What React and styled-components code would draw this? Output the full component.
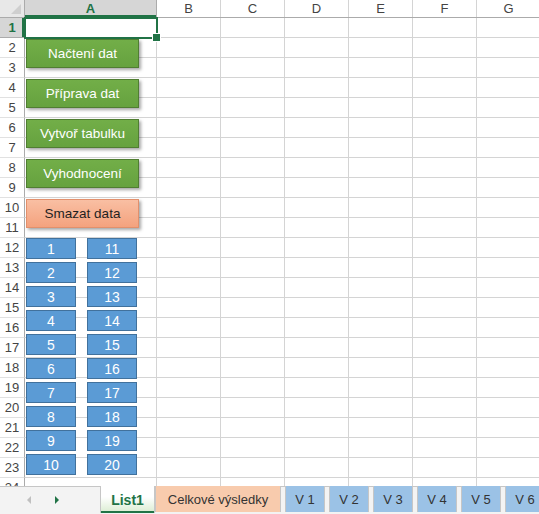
import React from "react";
import styled, { createGlobalStyle } from "styled-components";

const Global = createGlobalStyle`
  html, body { margin: 0; padding: 0; background: #fff; overflow: hidden; }
  * { box-sizing: border-box; }
`;

const COLS = [
  { key: "A", w: 132 },
  { key: "B", w: 64 },
  { key: "C", w: 64 },
  { key: "D", w: 64 },
  { key: "E", w: 64 },
  { key: "F", w: 64 },
  { key: "G", w: 64 },
];

const Page = styled.div`
  width: 539px;
  height: 514px;
  display: flex;
  flex-direction: column;
  font-family: "Liberation Sans", Arial, sans-serif;
  overflow: hidden;
`;

const Sheet = styled.div`
  position: relative;
  height: 486px;
  overflow: hidden;
  flex: none;
`;

const HeaderRow = styled.div`
  display: flex;
  height: 18px;
  border-bottom: 1px solid #ababab;
`;

const Corner = styled.div`
  position: relative;
  width: 25px;
  flex: none;
  background: #e8e8e8;
  border-right: 1px solid #ababab;
  &::after {
    content: "";
    position: absolute;
    right: 3px;
    bottom: 3px;
    width: 0;
    height: 0;
    border-left: 10px solid transparent;
    border-bottom: 10px solid #cfcfcf;
  }
`;

const ColHeader = styled.div`
  width: ${(p) => p.$w}px;
  flex: none;
  display: flex;
  align-items: center;
  justify-content: center;
  font-size: 13px;
  color: ${(p) => (p.$active ? "#217346" : "#444")};
  font-weight: ${(p) => (p.$active ? "bold" : "normal")};
  background: ${(p) => (p.$active ? "#d6d6d6" : "#fff")};
  border-right: 1px solid ${(p) => (p.$active ? "#ababab" : "#d4d4d4")};
  ${(p) => p.$active && "box-shadow: inset 0 -2px 0 #217346;"}
`;

const Row = styled.div`
  display: flex;
  height: 20px;
`;

const RowHeader = styled.div`
  width: 25px;
  flex: none;
  display: flex;
  align-items: center;
  justify-content: center;
  font-size: 13px;
  color: ${(p) => (p.$active ? "#217346" : "#444")};
  font-weight: ${(p) => (p.$active ? "bold" : "normal")};
  background: ${(p) => (p.$active ? "#d6d6d6" : "#fff")};
  border-right: 1px solid #ababab;
  border-bottom: 1px solid ${(p) => (p.$active ? "#ababab" : "#e1e1e1")};
  ${(p) => p.$active && "box-shadow: inset -2px 0 0 #217346;"}
`;

const Cell = styled.div`
  width: ${(p) => p.$w}px;
  flex: none;
  border-right: 1px solid #d4d4d4;
  border-bottom: 1px solid #d4d4d4;
`;

const Selection = styled.div`
  position: absolute;
  left: 24px;
  top: 17px;
  width: 134px;
  height: 22px;
  border: 2px solid #217346;
  pointer-events: none;
  &::after {
    content: "";
    position: absolute;
    right: -5px;
    bottom: -5px;
    width: 7px;
    height: 7px;
    background: #217346;
    border: 1px solid #fff;
  }
`;

const Shapes = styled.div`
  position: absolute;
  left: 26px;
  top: 39px;
  display: flex;
  flex-direction: column;
  gap: 10px;
`;

const ButtonStack = styled.div`
  display: flex;
  flex-direction: column;
  gap: 11px;
`;

const MacroButton = styled.div`
  width: 113px;
  height: 29px;
  display: flex;
  align-items: center;
  justify-content: center;
  font-size: 13.5px;
  color: ${(p) => (p.$variant === "peach" ? "#1f1f1f" : "#fff")};
  background: ${(p) =>
    p.$variant === "peach"
      ? "linear-gradient(#f9bfa3, #f4a27e)"
      : "linear-gradient(#72ae48, #66a23f)"};
  border: 1px solid ${(p) => (p.$variant === "peach" ? "#e2906c" : "#507e32")};
  box-shadow: 2px 2px 3px rgba(0, 0, 0, 0.35);
`;

const NumberGrid = styled.div`
  display: grid;
  grid-template-columns: 50px 50px;
  grid-auto-flow: column;
  grid-template-rows: repeat(10, 21px);
  column-gap: 11px;
  row-gap: 3px;
`;

const NumberBox = styled.div`
  display: flex;
  align-items: center;
  justify-content: center;
  font-size: 14px;
  color: #fff;
  background: #5b9bd5;
  border: 1px solid #41719c;
`;

const TabBar = styled.div`
  height: 28px;
  flex: none;
  display: flex;
  align-items: flex-start;
  background: #f3f3f3;
  border-top: 1px solid #c6c6c6;
`;

const Nav = styled.div`
  width: 100px;
  height: 26px;
  flex: none;
  display: flex;
  align-items: center;
  padding-left: 27px;
  gap: 24px;
`;

const Arrow = styled.span`
  width: 0;
  height: 0;
  border-top: 4px solid transparent;
  border-bottom: 4px solid transparent;
  ${(p) =>
    p.$dir === "left"
      ? `border-right: 4px solid ${p.$color};`
      : `border-left: 4px solid ${p.$color};`}
`;

const Tab = styled.div`
  height: 26px;
  margin-top: -1px;
  flex: none;
  width: ${(p) => p.$w}px;
  margin-right: ${(p) => p.$gap}px;
  display: flex;
  align-items: center;
  justify-content: center;
  font-size: ${(p) => (p.$active ? 14 : 13)}px;
  font-weight: ${(p) => (p.$active ? "bold" : "normal")};
  color: ${(p) => (p.$active ? "#217346" : "#333")};
  background: ${(p) => p.$bg};
  border-left: 1px solid #c6c6c6;
  border-right: 1px solid #c6c6c6;
  ${(p) =>
    p.$active &&
    "border-top-color: #fff; box-shadow: inset 0 -2px 0 #217346; height: 27px;"}
`;

const TABS = [
  { label: "List1", w: 55, gap: 0, bg: "linear-gradient(#ffffff 40%, #d9ecd0)", active: true },
  { label: "Celkové výsledky", w: 126, gap: 4, bg: "#f8cbad" },
  { label: "V 1", w: 40, gap: 4, bg: "#9bc2e6" },
  { label: "V 2", w: 40, gap: 4, bg: "#9bc2e6" },
  { label: "V 3", w: 40, gap: 4, bg: "#9bc2e6" },
  { label: "V 4", w: 40, gap: 4, bg: "#9bc2e6" },
  { label: "V 5", w: 40, gap: 4, bg: "#9bc2e6" },
  { label: "V 6", w: 40, gap: 4, bg: "#9bc2e6" },
];

const BUTTONS = [
  { label: "Načtení dat" },
  { label: "Příprava dat" },
  { label: "Vytvoř tabulku" },
  { label: "Vyhodnocení" },
  { label: "Smazat data", variant: "peach" },
];

export default function App() {
  const rows = Array.from({ length: 24 }, (_, i) => i + 1);
  const nums = Array.from({ length: 20 }, (_, i) => i + 1);
  return (
    <Page>
      <Global />
      <Sheet>
        <HeaderRow>
          <Corner />
          {COLS.map((c) => (
            <ColHeader key={c.key} $w={c.w} $active={c.key === "A"}>
              {c.key}
            </ColHeader>
          ))}
        </HeaderRow>
        {rows.map((r) => (
          <Row key={r}>
            <RowHeader $active={r === 1}>{r}</RowHeader>
            {COLS.map((c) => (
              <Cell key={c.key} $w={c.w} />
            ))}
          </Row>
        ))}
        <Selection />
        <Shapes>
          <ButtonStack>
            {BUTTONS.map((b) => (
              <MacroButton key={b.label} $variant={b.variant}>
                {b.label}
              </MacroButton>
            ))}
          </ButtonStack>
          <NumberGrid>
            {nums.map((n) => (
              <NumberBox key={n}>{n}</NumberBox>
            ))}
          </NumberGrid>
        </Shapes>
      </Sheet>
      <TabBar>
        <Nav>
          <Arrow $dir="left" $color="#c0c0c0" />
          <Arrow $dir="right" $color="#217346" />
        </Nav>
        {TABS.map((t) => (
          <Tab key={t.label} $w={t.w} $gap={t.gap} $bg={t.bg} $active={t.active}>
            {t.label}
          </Tab>
        ))}
      </TabBar>
    </Page>
  );
}
